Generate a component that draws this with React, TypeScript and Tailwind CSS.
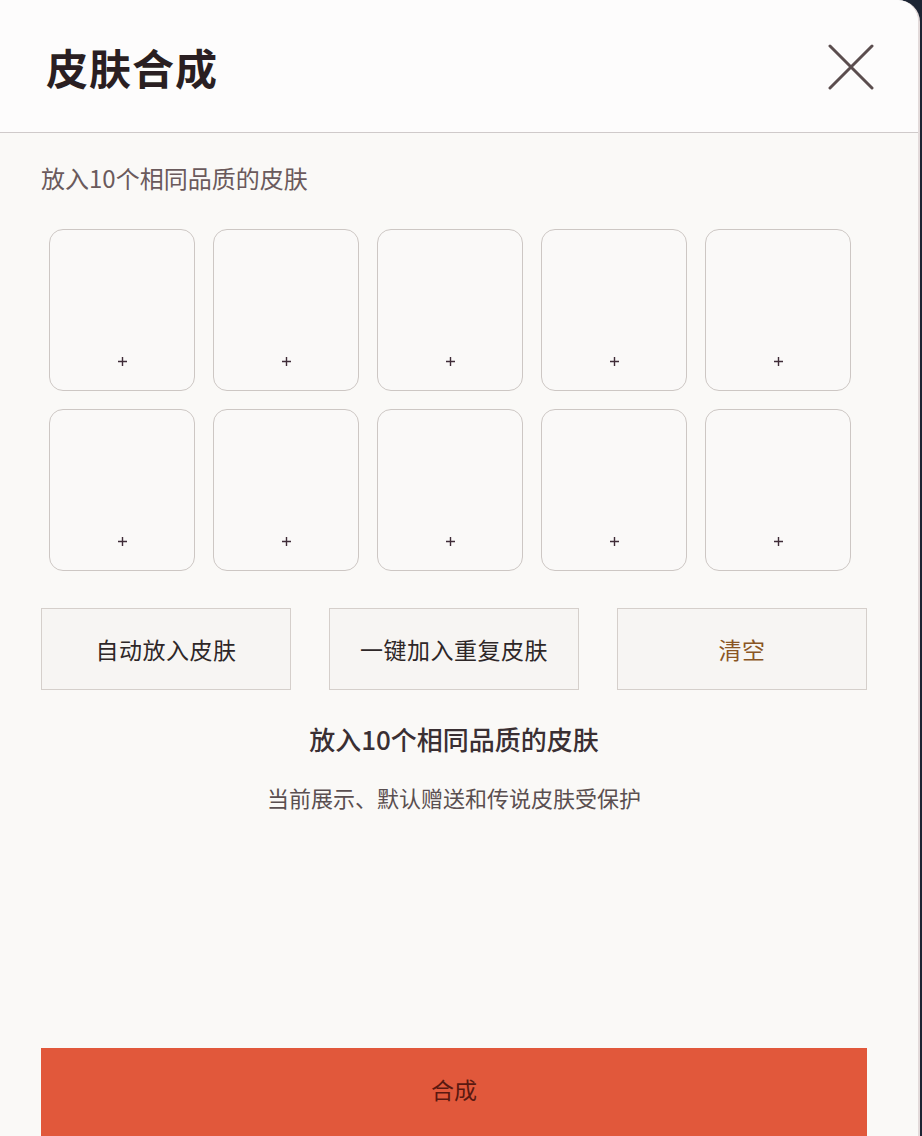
import React from 'react';

const slots = Array.from({ length: 10 }, (_, i) => i);

function Slot() {
  return (
    <div className="flex h-[162px] w-[146px] items-end justify-center rounded-[14px] border border-[#cdc7c4] bg-[#faf9f8] pb-[24px]">
      <svg width="9" height="9" viewBox="0 0 9 9">
        <path d="M4.5 0 V9 M0 4.5 H9" stroke="#3f2c38" strokeWidth="1.4" />
      </svg>
    </div>
  );
}

function ActionButton({ label, tone = 'dark' }: { label: string; tone?: 'dark' | 'brown' }) {
  return (
    <button
      className={
        'flex h-[82px] items-center justify-center border border-[#d5cfcb] bg-[#f7f5f3] text-[23px] tracking-[0.5px] ' +
        (tone === 'brown' ? 'text-[#8a5524]' : 'text-[#2e2728]')
      }
    >
      {label}
    </button>
  );
}

export default function App() {
  return (
    <div className="min-h-[1136px] w-[922px] bg-[#1c2433] font-['Noto_Sans_CJK_SC','Noto_Sans',sans-serif]">
      <div className="flex h-[1136px] w-[920px] flex-col overflow-hidden rounded-tr-[22px] border-r-2 border-[#e3dada] bg-[#faf9f7]">
        {/* Header */}
        <div className="flex h-[133px] shrink-0 items-center justify-between border-b border-[#cfcaca] bg-[#fdfcfc] pl-[46px] pr-[44px]">
          <h1 className="text-[42px] font-bold tracking-[1px] text-[#2a1f22]">皮肤合成</h1>
          <svg width="46" height="46" viewBox="0 0 46 46" className="mt-[2px]">
            <path d="M2 2 L44 44 M44 2 L2 44" stroke="#5b4d4e" strokeWidth="3" strokeLinecap="round" />
          </svg>
        </div>

        {/* Body */}
        <div className="flex flex-1 flex-col px-[41px] pt-[30px]">
          <p className="text-[24px] leading-[30px] text-[#6a5a5c]">放入10个相同品质的皮肤</p>

          <div className="mt-[36px] grid w-fit grid-cols-5 gap-[18px] pl-[8px]">
            {slots.map((i) => (
              <Slot key={i} />
            ))}
          </div>

          <div className="mt-[37px] grid grid-cols-3 gap-[38px] pr-[10px]">
            <ActionButton label="自动放入皮肤" />
            <ActionButton label="一键加入重复皮肤" />
            <ActionButton label="清空" tone="brown" />
          </div>

          <p className="mt-[31px] pr-[10px] text-center text-[26px] font-medium leading-[36px] text-[#3a2f33]">
            放入10个相同品质的皮肤
          </p>
          <p className="mt-[26px] pr-[10px] text-center text-[22px] leading-[28px] text-[#5a4f50]">
            当前展示、默认赠送和传说皮肤受保护
          </p>

          <div className="flex-1" />

          <button className="mr-[10px] flex h-[88px] shrink-0 items-start justify-center bg-[#e1583b] pt-[24px] text-[23px] text-[#5a1810]">
            合成
          </button>
        </div>
      </div>
    </div>
  );
}
